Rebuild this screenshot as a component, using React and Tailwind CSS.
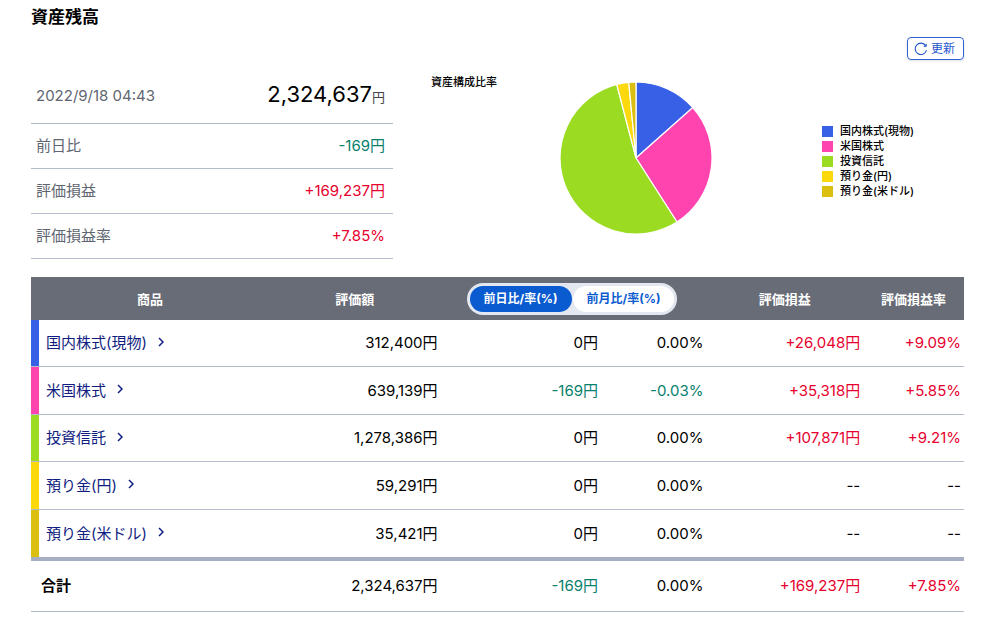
import { useState } from "react";

const assets = [
  {
    name: "国内株式(現物)",
    color: "#3860e6",
    amount: 312400,
    diff: "0円",
    diffRate: "0.00%",
    profit: "+26,048円",
    profitRate: "+9.09%",
  },
  {
    name: "米国株式",
    color: "#ff44b0",
    amount: 639139,
    diff: "-169円",
    diffRate: "-0.03%",
    profit: "+35,318円",
    profitRate: "+5.85%",
  },
  {
    name: "投資信託",
    color: "#9bdb22",
    amount: 1278386,
    diff: "0円",
    diffRate: "0.00%",
    profit: "+107,871円",
    profitRate: "+9.21%",
  },
  {
    name: "預り金(円)",
    color: "#fbd90c",
    amount: 59291,
    diff: "0円",
    diffRate: "0.00%",
    profit: "--",
    profitRate: "--",
  },
  {
    name: "預り金(米ドル)",
    color: "#dabe10",
    amount: 35421,
    diff: "0円",
    diffRate: "0.00%",
    profit: "--",
    profitRate: "--",
  },
];

const total = assets.reduce((sum, a) => sum + a.amount, 0);

const formatYen = (n) => n.toLocaleString("en-US");

// negative values are green, positive ones red
const toneOf = (value) => {
  if (/^-\d/.test(value)) return "text-[#07806e]";
  if (value.startsWith("+")) return "text-[#e6002d]";
  return "text-black";
};

function RefreshIcon() {
  return (
    <svg viewBox="0 0 14 14" className="w-3.5 h-3.5" fill="none" aria-hidden="true">
      <path
        d="M12.3 8.6A5.7 5.7 0 1 1 11.6 3.6"
        stroke="currentColor"
        strokeWidth="1.1"
        strokeLinecap="round"
      />
      <path d="M12.7 1.4v3.4H9.3z" fill="currentColor" />
    </svg>
  );
}

function ChevronIcon() {
  return (
    <svg viewBox="0 0 6 10" className="w-1.5 h-2.5 mb-[3px]" fill="none" aria-hidden="true">
      <path d="M1 1l4 4-4 4" stroke="currentColor" strokeWidth="1.5" />
    </svg>
  );
}

function PieChart() {
  const r = 76;
  const point = (ratio) => {
    const angle = ratio * Math.PI * 2;
    return `${r + r * Math.sin(angle)} ${r - r * Math.cos(angle)}`;
  };

  let start = 0;
  const slices = assets.map((asset) => {
    const end = start + asset.amount / total;
    const large = end - start > 0.5 ? 1 : 0;
    const d = `M${r} ${r}L${point(start)}A${r} ${r} 0 ${large} 1 ${point(end)}Z`;
    start = end;
    return { d, color: asset.color };
  });

  return (
    <svg viewBox="-1 -1 154 154" className="w-[154px] h-[154px] shrink-0" role="img" aria-label="資産構成比率">
      {slices.map((slice) => (
        <path key={slice.color} d={slice.d} fill={slice.color} stroke="#fff" strokeWidth="1.2" />
      ))}
    </svg>
  );
}

function SummaryRow({ label, value }) {
  return (
    <div className="flex items-center justify-between h-[45px] pl-[5px] pr-2 border-b border-[#b4bccb]">
      <dt className="text-[#5f6671]">{label}</dt>
      <dd className={toneOf(value)}>{value}</dd>
    </div>
  );
}

function ValueCell({ value }) {
  return <td className={`pr-[3px] text-right ${toneOf(value)}`}>{value}</td>;
}

function PeriodToggle() {
  const [period, setPeriod] = useState("day");
  const base = "h-[26px] px-3.5 rounded-full text-xs font-bold whitespace-nowrap";
  const on = "bg-[#0a5bd0] text-white";
  const off = "bg-white text-[#0a5bd0]";

  return (
    <div className="inline-flex gap-px p-[3px] rounded-full bg-[#e3e7f0] align-middle">
      <button
        type="button"
        aria-pressed={period === "day"}
        onClick={() => setPeriod("day")}
        className={`${base} ${period === "day" ? on : off}`}
      >
        前日比/率(%)
      </button>
      <button
        type="button"
        aria-pressed={period === "month"}
        onClick={() => setPeriod("month")}
        className={`${base} ${period === "month" ? on : off}`}
      >
        前月比/率(%)
      </button>
    </div>
  );
}

export default function App() {
  return (
    <main className="pl-[31px] pr-9 pt-[5px] pb-5 bg-white text-black text-[15px] leading-6 font-[Inter,'Noto_Sans_CJK_JP',sans-serif]">
      <h1 className="text-[17px] font-bold">資産残高</h1>

      <div className="flex justify-end mt-2">
        <button
          type="button"
          className="flex items-center gap-[3px] h-[23px] px-1.5 pr-2 border border-[#2f62d0] rounded text-xs text-[#2458cc] shadow-sm"
        >
          <RefreshIcon />
          更新
        </button>
      </div>

      <div className="flex items-start mt-2">
        <dl className="w-[38.8%] shrink-0">
          <div className="flex items-center justify-between h-14 pl-[5px] pr-2 border-b border-[#b4bccb]">
            <dt className="text-[#5f6671]">2022/9/18 04:43</dt>
            <dd className="text-[22px]">
              {formatYen(total)}
              <span className="text-[13px] text-[#444]">円</span>
            </dd>
          </div>
          <SummaryRow label="前日比" value="-169円" />
          <SummaryRow label="評価損益" value="+169,237円" />
          <SummaryRow label="評価損益率" value="+7.85%" />
        </dl>

        <section className="flex items-start grow pl-[38px] pt-[13px] text-[11px] font-medium">
          <h2 className="w-32 leading-none -mt-1">資産構成比率</h2>
          <PieChart />
          <ul className="mt-[43px] ml-[109px]">
            {assets.map((asset) => (
              <li key={asset.name} className="flex items-center gap-[7px] h-[15px] leading-none whitespace-nowrap">
                <span className="w-[11px] h-[11px]" style={{ backgroundColor: asset.color }} />
                {asset.name}
              </li>
            ))}
          </ul>
        </section>
      </div>

      <table className="w-full mt-[18px] table-fixed border-separate border-spacing-0">
        <colgroup>
          <col className="w-[25.5%]" />
          <col className="w-[18.4%]" />
          <col className="w-[17.2%]" />
          <col className="w-[11.3%]" />
          <col className="w-[16.8%]" />
          <col className="w-[10.8%]" />
        </colgroup>
        <thead className="bg-[#686c76] text-[13px] text-white">
          <tr className="h-[43px]">
            <th scope="col">商品</th>
            <th scope="col">評価額</th>
            <th scope="col" colSpan={2} className="pr-[3px]">
              <PeriodToggle />
            </th>
            <th scope="col">評価損益</th>
            <th scope="col">評価損益率</th>
          </tr>
        </thead>
        <tbody className="[&>tr:not(:last-child)>*]:border-b [&>tr>*]:border-[#b4bccb]">
          {assets.map((asset) => (
            <tr key={asset.name} className="odd:h-[47px] even:h-12">
              <th scope="row" className="h-px p-0 text-left font-normal">
                <div className="flex items-center h-full">
                  <span className="w-2 h-full" style={{ backgroundColor: asset.color }} />
                  <a href="#" className="flex items-center gap-[11px] pl-[7px] text-[#0f1d80]">
                    {asset.name}
                    <ChevronIcon />
                  </a>
                </div>
              </th>
              <ValueCell value={`${formatYen(asset.amount)}円`} />
              <ValueCell value={asset.diff} />
              <ValueCell value={asset.diffRate} />
              <ValueCell value={asset.profit} />
              <ValueCell value={asset.profitRate} />
            </tr>
          ))}
        </tbody>
        <tfoot className="[&>tr>*]:border-t-4 [&>tr>*]:border-b [&>tr>*]:border-t-[#a5aec2] [&>tr>*]:border-b-[#b4bccb]">
          <tr className="h-[55px]">
            <th scope="row" className="pl-2.5 text-left font-bold">合計</th>
            <ValueCell value={`${formatYen(total)}円`} />
            <ValueCell value="-169円" />
            <ValueCell value="0.00%" />
            <ValueCell value="+169,237円" />
            <ValueCell value="+7.85%" />
          </tr>
        </tfoot>
      </table>
    </main>
  );
}
